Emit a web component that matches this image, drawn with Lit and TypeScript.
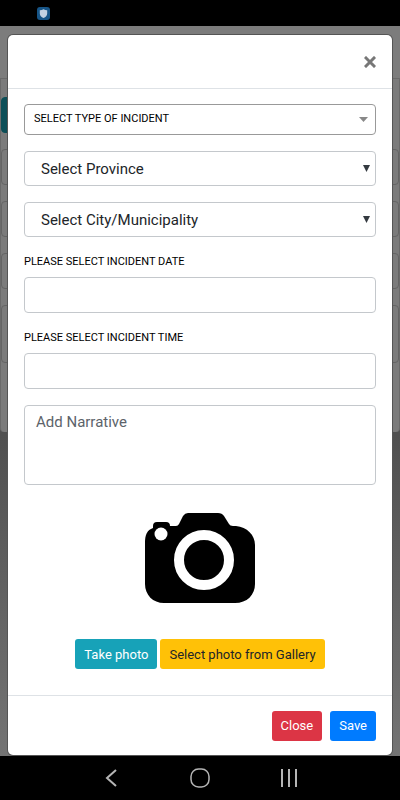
import { LitElement, html, css, svg } from "lit";
import { customElement, state } from "lit/decorators.js";

@customElement("app-root")
export class AppRoot extends LitElement {
  @state() private open = true;

  static styles = css`
    :host {
      display: flex;
      flex-direction: column;
      min-height: 100vh;
      background: #000;
      font-family: Roboto, "Liberation Sans", sans-serif;
      font-size: 15px;
      color: #212529;
    }
    *, *::before, *::after { box-sizing: border-box; }
    .status {
      height: 26px;
      padding-left: 37px;
      display: flex;
      align-items: center;
      background: #000;
    }
    .status svg { display: block; }
    .stage { flex: 1; display: grid; }
    .page, .modal { grid-area: 1 / 1; min-width: 0; }
    .page {
      display: flex;
      flex-direction: column;
      background: linear-gradient(#3c3c3c, #505050 56%, #747474);
    }
    .page-head { height: 53px; background: #7c7c7c; border-bottom: 1px solid #6a6a6a; }
    .page-card {
      height: 353px;
      padding: 18px 0 0;
      display: flex;
      flex-direction: column;
      gap: 16px;
      background: #7b7b7b;
      border: solid #6a6a6a;
      border-width: 0 1px;
      border-radius: 0 0 4px 4px;
    }
    .ghost { height: 36px; flex: none; border: 1px solid #646464; border-radius: 4px; }
    .ghost.action { width: 96px; background: #0c4e57; border-color: #0c4e57; }
    .ghost.tall { height: 58px; }
    .modal {
      margin: 9px 8px 1px;
      display: flex;
      flex-direction: column;
      background: #fff;
      border-radius: 5px;
      box-shadow: 0 0 0 1px #555;
    }
    .modal[hidden] { display: none; }
    header {
      height: 54px;
      padding: 0 16px;
      display: flex;
      align-items: center;
      justify-content: flex-end;
      border-bottom: 1px solid #dee2e6;
    }
    .x { border: 0; padding: 0; background: none; display: flex; }
    .body { flex: 1; padding: 15px 16px 0; display: flex; flex-direction: column; }
    .pick { display: grid; align-items: center; margin-bottom: 16px; }
    .pick select, .pick svg { grid-area: 1 / 1; }
    .pick svg { justify-self: end; margin-right: 6px; pointer-events: none; }
    .pick.type svg { margin-right: 8px; }
    select, input, textarea {
      display: block;
      width: 100%;
      margin: 0;
      font: inherit;
      color: #212529;
      background: #fff;
      border: 1px solid #c4c8cc;
      border-radius: 4px;
      outline: 0;
    }
    select { appearance: none; height: 35px; padding: 0 24px 0 16px; }
    .type select {
      height: 31px;
      padding: 0 24px 3px 9px;
      font-size: 11px;
      color: #000;
      border-color: #999;
    }
    label {
      height: 24px;
      line-height: 18px;
      font-size: 11px;
      color: #000;
    }
    input { height: 36px; padding: 0 12px; margin-bottom: 16px; }
    textarea { height: 80px; padding: 5px 11px; line-height: 22px; resize: none; }
    textarea::placeholder { color: #5c636a; opacity: 1; }
    .camera { display: block; align-self: center; margin: 28px 0 36px; }
    .photo { display: flex; justify-content: center; gap: 3px; margin-bottom: 26px; }
    .btn {
      height: 30px;
      padding: 0 9px;
      border: 0;
      border-radius: 3px;
      font: inherit;
      font-size: 13px;
      color: #fff;
      white-space: nowrap;
    }
    .info { background: #17a2b8; }
    .warn { background: #ffc107; color: #212529; }
    .danger { background: #dc3545; }
    .primary { background: #007bff; }
    footer {
      height: 60px;
      padding: 0 16px;
      display: flex;
      align-items: center;
      justify-content: flex-end;
      gap: 8px;
      border-top: 1px solid #dee2e6;
    }
    nav {
      height: 44px;
      padding: 0 66px;
      display: grid;
      grid-template-columns: repeat(3, 1fr);
      place-items: center;
      background: #000;
    }
    nav button { border: 0; padding: 0; background: none; display: flex; }
  `;

  private arrow(width: number, height: number, color: string) {
    return svg`<svg width=${width} height=${height} viewBox="0 0 10 10" preserveAspectRatio="none" aria-hidden="true">
      <path d="M0 0H10L5 10Z" fill=${color} /></svg>`;
  }

  private close() {
    this.open = false;
  }

  render() {
    return html`
      <div class="status">
        <svg width="13" height="13" viewBox="0 0 13 13" aria-hidden="true">
          <rect width="13" height="13" rx="3" fill="#175587" />
          <path d="M6.500 2.300Q8.300 3.400 10.200 3.300V6.500Q10 9.500 6.500 11Q3 9.500 2.800 6.500V3.300Q4.700 3.400 6.500 2.300Z" fill="#c3d2e2" />
        </svg>
      </div>
      <main class="stage">
        <div class="page" aria-hidden="true">
          <div class="page-head"></div>
          <div class="page-card">
            <div class="ghost action"></div>
            <div class="ghost"></div>
            <div class="ghost"></div>
            <div class="ghost"></div>
            <div class="ghost tall"></div>
          </div>
        </div>
        <section class="modal" role="dialog" aria-label="Incident report" ?hidden=${!this.open}>
          <header>
            <button class="x" aria-label="Close dialog" @click=${this.close}>
              <svg width="12" height="12" viewBox="0 0 12 12" aria-hidden="true">
                <path d="M2 2L10 10M10 2L2 10" stroke="#777" stroke-width="3" stroke-linecap="square" />
              </svg>
            </button>
          </header>
          <div class="body">
            <div class="pick type">
              <select aria-label="Type of incident"><option>SELECT TYPE OF INCIDENT</option></select>
              ${this.arrow(9, 5, "#888")}
            </div>
            <div class="pick">
              <select aria-label="Province"><option>Select Province</option></select>
              ${this.arrow(7, 7, "#343a40")}
            </div>
            <div class="pick">
              <select aria-label="City or municipality"><option>Select City/Municipality</option></select>
              ${this.arrow(7, 7, "#343a40")}
            </div>
            <label for="date">PLEASE SELECT INCIDENT DATE</label>
            <input id="date" type="text" />
            <label for="time">PLEASE SELECT INCIDENT TIME</label>
            <input id="time" type="text" />
            <textarea aria-label="Narrative" placeholder="Add Narrative"></textarea>
            <svg class="camera" width="112" height="90" viewBox="0 0 112 90" role="img" aria-label="Camera">
              <path d="M9 13Q9 9 13 9H22Q26 9 26 13H32Q34 13 35 11L39 3Q41 0 44 0H74Q78 0 80 3L85 11Q86 13 89 13H92C103 14 111 22 111 32V71C111 82 103 90 91 90H20C9 90 1 82 1 71V30C1 22 3 17 9 15Z" fill="#000" />
              <circle cx="60" cy="47" r="25" fill="#000" stroke="#fff" stroke-width="10" />
              <circle cx="17" cy="21" r="6.500" fill="#fff" />
            </svg>
            <div class="photo">
              <button class="btn info">Take photo</button>
              <button class="btn warn">Select photo from Gallery</button>
            </div>
          </div>
          <footer>
            <button class="btn danger" @click=${this.close}>Close</button>
            <button class="btn primary">Save</button>
          </footer>
        </section>
      </main>
      <nav aria-label="System">
        <button aria-label="Back">
          <svg width="12" height="18" viewBox="0 0 12 18" fill="none" stroke="#b5b5b5" stroke-width="2"><path d="M11 1L2 9L11 17" /></svg>
        </button>
        <button aria-label="Home">
          <svg width="20" height="20" viewBox="0 0 20 20" fill="none" stroke="#b5b5b5" stroke-width="1.500"><rect x="1" y="1" width="18" height="18" rx="7.500" /></svg>
        </button>
        <button aria-label="Recent apps">
          <svg width="18" height="18" viewBox="0 0 18 18" fill="none" stroke="#b5b5b5" stroke-width="2"><path d="M2 0V18M9 0V18M16 0V18" /></svg>
        </button>
      </nav>
    `;
  }
}
